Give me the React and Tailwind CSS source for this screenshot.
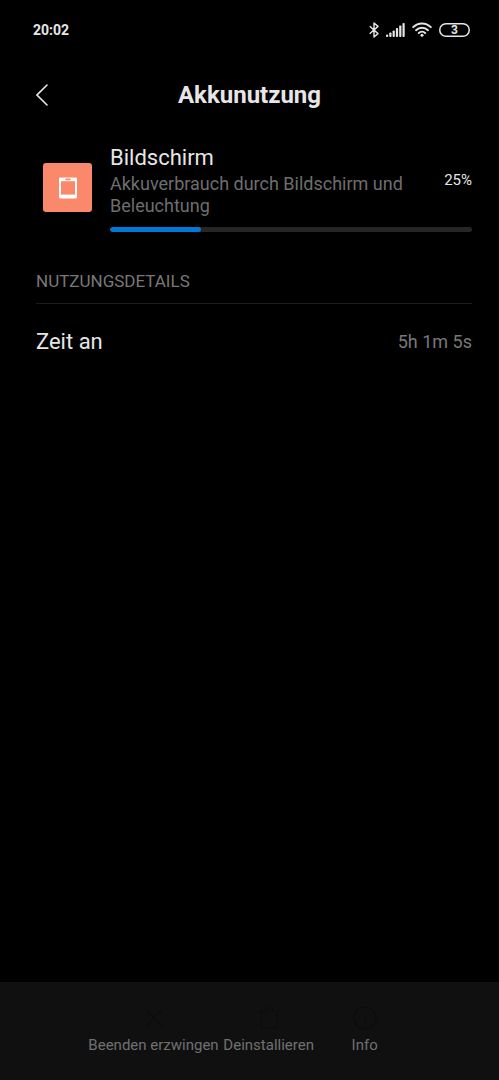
import React from "react";

const APP = {
  name: "Bildschirm",
  description: "Akkuverbrauch durch Bildschirm und Beleuchtung",
  percent: 25,
};

const DETAILS = [{ label: "Zeit an", value: "5h 1m 5s" }];

const ACTIONS = [
  { label: "Beenden erzwingen", Icon: CloseIcon },
  { label: "Deinstallieren", Icon: TrashIcon },
  { label: "Info", Icon: InfoIcon },
];

export default function App() {
  return (
    <div className="flex min-h-screen flex-col bg-black font-[Roboto,sans-serif] text-[#e6e6e6]">
      <StatusBar />
      <header className="grid grid-cols-[32px_1fr_32px] items-center px-7 pt-5">
        <button type="button" aria-label="Zurück" className="flex h-8 items-center pl-2">
          <svg width="12" height="22" viewBox="0 0 12 22" fill="none" stroke="currentColor" strokeWidth="1.6" strokeLinecap="round">
            <path d="M11 1 L1 11 L11 21" />
          </svg>
        </button>
        <h1 className="text-center text-2xl font-bold">Akkunutzung</h1>
      </header>

      <main className="flex-1 pr-[27px] pl-9">
        <UsageSummary />
        <h2 className="mt-[35px] border-b border-[#1c1c1c] pb-2 text-[17px] leading-7 text-[#787878] uppercase">
          Nutzungsdetails
        </h2>
        <dl>
          {DETAILS.map((item) => (
            <div key={item.label} className="flex h-[75px] items-center justify-between">
              <dt className="text-[22px]">{item.label}</dt>
              <dd className="text-lg text-[#787878]">{item.value}</dd>
            </div>
          ))}
        </dl>
      </main>

      <footer className="flex justify-center bg-[#101010] py-6">
        {ACTIONS.map(({ label, Icon }) => (
          <button
            key={label}
            type="button"
            disabled
            className="flex min-w-24 flex-col items-center gap-1 px-0.5 text-[15px] leading-[22px] text-[#707070]"
          >
            <Icon />
            {label}
          </button>
        ))}
      </footer>
    </div>
  );
}

function StatusBar() {
  return (
    <div className="flex h-[59px] items-center justify-between pr-[29px] pl-[33px]">
      <span className="text-sm font-bold">20:02</span>
      <div className="flex items-center gap-[7px]">
        <svg width="10" height="16" viewBox="0 0 10 16" fill="none" stroke="currentColor" strokeWidth="1.4" strokeLinejoin="round">
          <path d="M0.7 4.3 L9 11.6 L5 15 V1 L9 4.4 L0.7 11.7" />
        </svg>
        <svg width="19" height="14" viewBox="0 0 19 14" fill="currentColor">
          <rect x="0" y="11.5" width="2.2" height="2.5" rx="0.8" />
          <rect x="3.3" y="9.5" width="2.2" height="4.5" rx="0.8" />
          <rect x="6.6" y="7.5" width="2.2" height="6.5" rx="0.8" />
          <rect x="9.9" y="5" width="2.2" height="9" rx="0.8" />
          <rect x="13.2" y="2.5" width="2.2" height="11.5" rx="0.8" />
          <rect x="16.5" y="0" width="2.2" height="14" rx="0.8" />
        </svg>
        <svg width="20" height="15" viewBox="0 0 20 15" fill="none" stroke="currentColor" strokeWidth="1.9" strokeLinecap="round">
          <path d="M1.2 5.2 C6.2 0.2 13.8 0.2 18.8 5.2" />
          <path d="M4 8.2 C7.4 4.9 12.6 4.9 16 8.2" />
          <path d="M6.8 11 C8.6 9.3 11.4 9.3 13.2 11" />
          <circle cx="10" cy="13.2" r="1.5" fill="currentColor" stroke="none" />
        </svg>
        <span className="grid h-[14px] w-[31px] place-items-center text-xs leading-[14px] font-bold">
          <svg className="col-start-1 row-start-1" width="31" height="14" viewBox="0 0 31 14" fill="none" stroke="currentColor" strokeWidth="1.5">
            <rect x="0.75" y="0.75" width="29.5" height="12.5" rx="6.25" />
          </svg>
          <span className="col-start-1 row-start-1">3</span>
        </span>
      </div>
    </div>
  );
}

function UsageSummary() {
  return (
    <section className="flex items-center gap-[18px] pt-8 pl-[7px]">
      <div className="flex h-[49px] w-[49px] shrink-0 items-center justify-center rounded-[3px] bg-[#fa896b]">
        <svg width="18" height="22" viewBox="0 0 18 22">
          <rect y="0.5" width="18" height="21" rx="1.4" fill="#fff" />
          <rect x="2" y="4.2" width="14" height="13.4" fill="#fa896b" />
          <rect x="6.3" y="1.6" width="5.4" height="1.6" rx="0.6" fill="#fa896b" />
        </svg>
      </div>
      <div className="flex-1">
        <div className="flex items-center justify-between gap-6">
          <div>
            <div className="text-[22px] leading-[30px]">{APP.name}</div>
            <p className="text-lg leading-[22px] text-[#6e6e6e]">{APP.description}</p>
          </div>
          <span className="text-[15px]">{APP.percent}%</span>
        </div>
        <div
          role="progressbar"
          aria-label="Akkuverbrauch"
          aria-valuenow={APP.percent}
          className="mt-[10px] h-[5px] overflow-hidden rounded-full bg-[#262626]"
        >
          <div className="h-full rounded-full bg-[#0078d6]" style={{ width: `${APP.percent}%` }} />
        </div>
      </div>
    </section>
  );
}

function CloseIcon() {
  return (
    <svg width="24" height="24" viewBox="0 0 24 24" fill="none" stroke="#0c0c0c" strokeWidth="1.2">
      <path d="M4 4 L20 20 M20 4 L4 20" />
    </svg>
  );
}

function TrashIcon() {
  return (
    <svg width="24" height="24" viewBox="0 0 24 24" fill="none" stroke="#0c0c0c" strokeWidth="1.2">
      <path d="M1.5 5 H22.5 M8 5 V2 H16 V5 M4 5 V20 Q4 22 6 22 H18 Q20 22 20 20 V5" />
    </svg>
  );
}

function InfoIcon() {
  return (
    <svg width="24" height="24" viewBox="0 0 24 24" fill="none" stroke="#0c0c0c" strokeWidth="1.2">
      <circle cx="12" cy="12" r="11" />
      <path d="M12 6 V8 M12 10 V18" />
    </svg>
  );
}
